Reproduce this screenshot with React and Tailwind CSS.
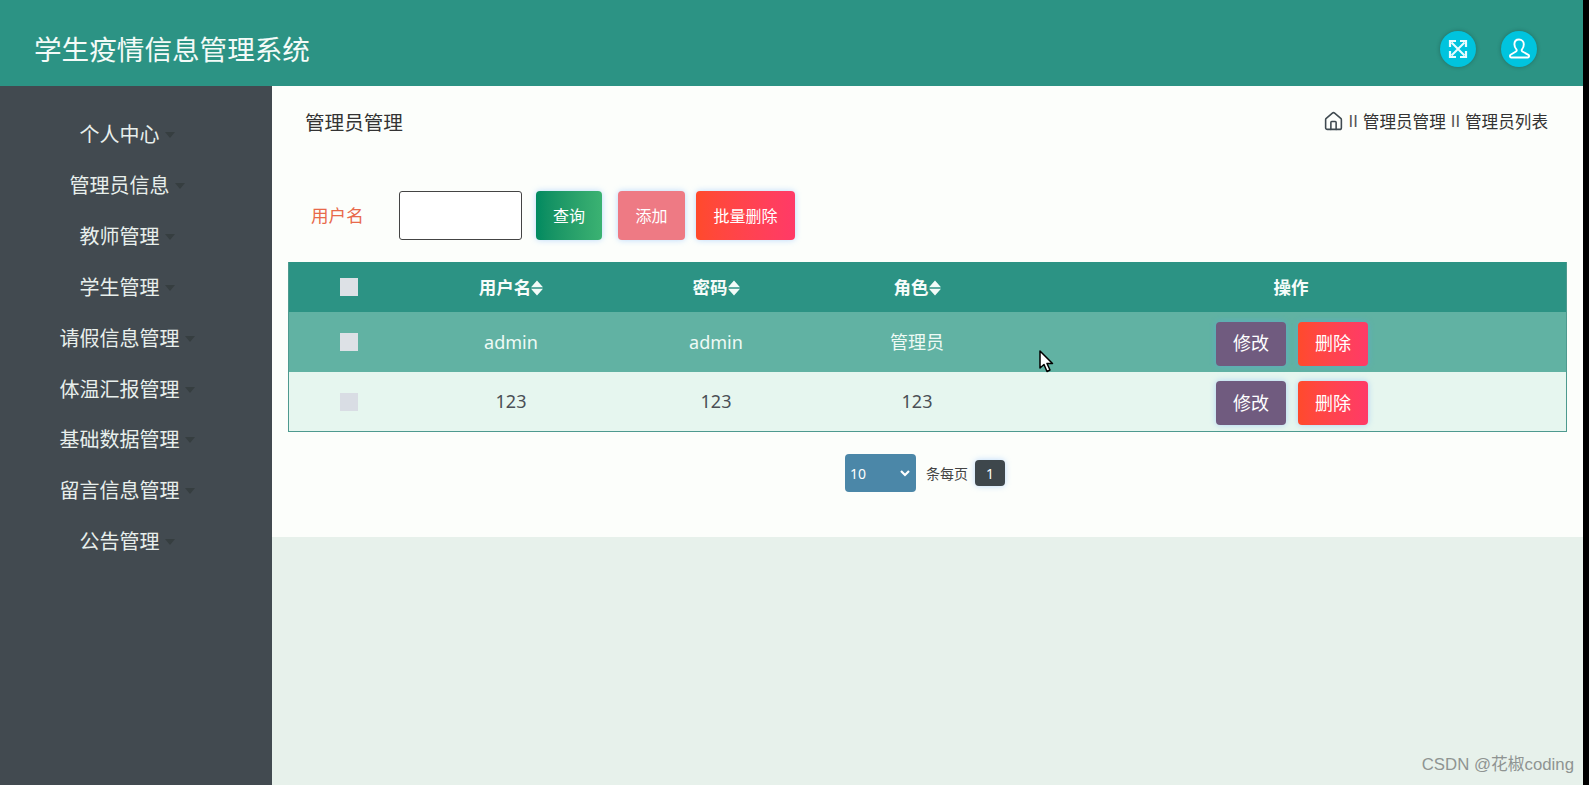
import { Home } from 'lucide-react';

const menu = ['个人中心', '管理员信息', '教师管理', '学生管理', '请假信息管理', '体温汇报管理', '基础数据管理', '留言信息管理', '公告管理'];

const rows = [
  { id: 1, name: 'admin', pwd: 'admin', role: '管理员', trClass: 'bg-[#61b2a3] text-[#eefaf5] h-[60px]', cbClass: 'bg-[#dde1e6]' },
  { id: 2, name: '123', pwd: '123', role: '123', trClass: 'bg-[#e6f6ef] text-[#4a4f55] h-[59px]', cbClass: 'bg-[#d9dde4]' },
];

function SortIcon() {
  return (
    <svg width="12" height="16" viewBox="0 0 12 16" className="inline-block align-[-2px]">
      <path d="M6 .5 L12 7.300 H0 Z M6 15.500 L12 8.700 H0 Z" fill="#f2fbf8" />
    </svg>
  );
}

function ExpandIcon() {
  return (
    <svg width="20" height="20" viewBox="0 0 20 20" fill="none" stroke="#eafcff" strokeWidth="2">
      <path d="M3.500 3.500 L16.500 16.500 M16.500 3.500 L3.500 16.500" />
      <path d="M2 8V2h6 M12 2h6v6 M18 12v6h-6 M8 18H2v-6" strokeWidth="2.200" />
    </svg>
  );
}

function UserIcon() {
  return (
    <svg width="24" height="24" viewBox="0 0 24 24" fill="none" stroke="white" strokeWidth="1.900" strokeLinejoin="round">
      <path d="M12 2.500c-2.800 0-4.600 2-4.600 4.800 0 2.100.8 3.800 2 5 .6.600.4 1.700-.4 2.200l-5.400 3.300c-1.100.7-.8 2.700.6 2.700h16.600c1.400 0 1.700-2 .6-2.700L15.400 14.500c-.8-.5-1-1.600-.4-2.200 1.200-1.200 1.800-2.900 1.800-5 0-2.800-2-4.800-4.800-4.800z" />
    </svg>
  );
}

function Cursor() {
  return (
    <svg width="16" height="23" viewBox="0 0 16 23" className="absolute left-[1039px] top-[350px]">
      <path d="M1 1 L1 18 L5 14.500 L8 21.500 L11 20 L8 13.500 L13.500 13.500 Z" fill="white" stroke="black" strokeWidth="1.500" strokeLinejoin="round" />
    </svg>
  );
}

const shadow = 'shadow-[0_0_6px_rgba(90,160,255,0.4)]';

export default function App() {
  return (
    <div className="relative w-[1589px] h-[785px] bg-black overflow-hidden font-['Noto_Sans','Noto_Sans_CJK_SC',sans-serif]">
      <div className="w-[1583px] h-full flex flex-col bg-[#e7f1eb]">
        <header className="h-[86px] shrink-0 bg-[#2c9384] flex items-center justify-between pl-[34px] pr-[46px]">
          <h1 className="text-[27.6px] text-[#f4fbf8] font-normal mt-[14px]">学生疫情信息管理系统</h1>
          <div className="flex items-center gap-[25px] mt-[12px]">
            <div className="w-9 h-9 rounded-full bg-[#00c4de] flex items-center justify-center shadow-[0_0_4px_rgba(0,0,0,0.25)]">
              <ExpandIcon />
            </div>
            <div className="w-9 h-9 rounded-full bg-[#00c4de] flex items-center justify-center shadow-[0_0_4px_rgba(0,0,0,0.25)]">
              <UserIcon />
            </div>
          </div>
        </header>

        <div className="flex flex-1 min-h-0">
          <aside className="w-[272px] shrink-0 bg-[#424a50] pt-[24px]">
            {menu.map((m) => (
              <div key={m} className="h-[50.85px] flex items-center justify-center gap-[5px] pr-[18px] text-[20px] text-[#e8efec]">
                <span>{m}</span>
                <span className="w-0 h-0 border-x-[5px] border-t-[6px] border-x-transparent border-t-[#363e40]" />
              </div>
            ))}
          </aside>

          <main className="flex-1 self-start bg-[#fcfefb] pb-[45px]">
            <div className="h-[74px] flex items-center justify-between pl-[33px] pr-[35px]">
              <span className="text-[19.6px] text-[#333]">管理员管理</span>
              <div className="flex items-center gap-[5px] mb-[2px] text-[16.6px] text-[#333]">
                <Home size={21} color="#3f4a50" strokeWidth={1.8} />
                <span className="text-[#555] font-['Liberation_Sans',sans-serif]">II</span>
                <span>管理员管理</span>
                <span className="text-[#555] font-['Liberation_Sans',sans-serif]">II</span>
                <span>管理员列表</span>
              </div>
            </div>

            <div className="mt-[31px] h-[49px] flex items-center pl-[39px]">
              <label className="w-[88px] text-[17.6px] text-[#e8694a]">用户名</label>
              <input className="w-[123px] h-[49px] rounded-[3px] border-[1.5px] border-[#444] bg-white" />
              <button className={`ml-[14px] w-[66px] h-[49px] rounded-[4px] text-[16px] text-white bg-gradient-to-r from-[#008a60] to-[#3bb272] ${shadow}`}>查询</button>
              <button className={`ml-[16px] w-[67px] h-[49px] rounded-[4px] text-[16px] text-white bg-[#ee7a84] ${shadow}`}>添加</button>
              <button className={`ml-[11px] w-[99px] h-[49px] rounded-[4px] text-[16px] text-white bg-gradient-to-r from-[#ff4a2b] to-[#ff3a67] ${shadow}`}>批量删除</button>
            </div>

            <div className="mt-[22px] mx-4 border border-[#4d9a8f] border-t-0">
              <table className="w-full table-fixed border-collapse text-center">
                <colgroup>
                  <col className="w-[119px]" />
                  <col className="w-[206px]" />
                  <col className="w-[204px]" />
                  <col className="w-[198px]" />
                  <col />
                </colgroup>
                <thead>
                  <tr className="h-[50px] bg-[#2c9384] text-[17.5px] font-bold text-[#f6fcfa]">
                    <th><span className="block w-[18px] h-[18px] bg-[#dde1e6] mx-auto" /></th>
                    <th>用户名<SortIcon /></th>
                    <th>密码<SortIcon /></th>
                    <th>角色<SortIcon /></th>
                    <th>操作</th>
                  </tr>
                </thead>
                <tbody>
                  {rows.map((r) => (
                    <tr key={r.id} className={`${r.trClass} text-[18px]`}>
                      <td><span className={`block w-[18px] h-[18px] mx-auto ${r.cbClass}`} /></td>
                      <td>{r.name}</td>
                      <td>{r.pwd}</td>
                      <td>{r.role}</td>
                      <td>
                        <div className="flex justify-center gap-[12px] ml-[2px] pt-[3px]">
                          <button className={`w-[70px] h-[44px] rounded-[4px] text-[18px] text-white bg-[#705b7f] ${shadow}`}>修改</button>
                          <button className={`w-[70px] h-[44px] rounded-[4px] text-[18px] text-white bg-gradient-to-r from-[#ff4a2b] to-[#ff3a67] ${shadow}`}>删除</button>
                        </div>
                      </td>
                    </tr>
                  ))}
                </tbody>
              </table>
            </div>

            <div className="mt-[22px] flex items-center justify-center gap-[10px] pr-[5px]">
              <div className="relative w-[71px] h-[38px] rounded-[4px] bg-[#4b87a8] text-[14px] text-white flex items-center justify-between px-[5px]">
                <span>10</span>
                <svg width="12" height="12" viewBox="0 0 12 12" fill="none" stroke="white" strokeWidth="2.200"><path d="M2 4l4 4 4-4" /></svg>
              </div>
              <span className="text-[14px] text-[#444]">条每页</span>
              <span className={`-ml-[3px] w-[30px] h-[26px] rounded-[4px] bg-[#3e474c] text-[14px] text-white flex items-center justify-center ${shadow}`}>1</span>
            </div>
          </main>
        </div>
      </div>
      <Cursor />
      <span className="absolute right-[15px] bottom-[8px] text-[16.8px] text-[#8f9492] font-['Liberation_Sans','Noto_Sans_CJK_SC',sans-serif]">CSDN @花椒coding</span>
    </div>
  );
}
